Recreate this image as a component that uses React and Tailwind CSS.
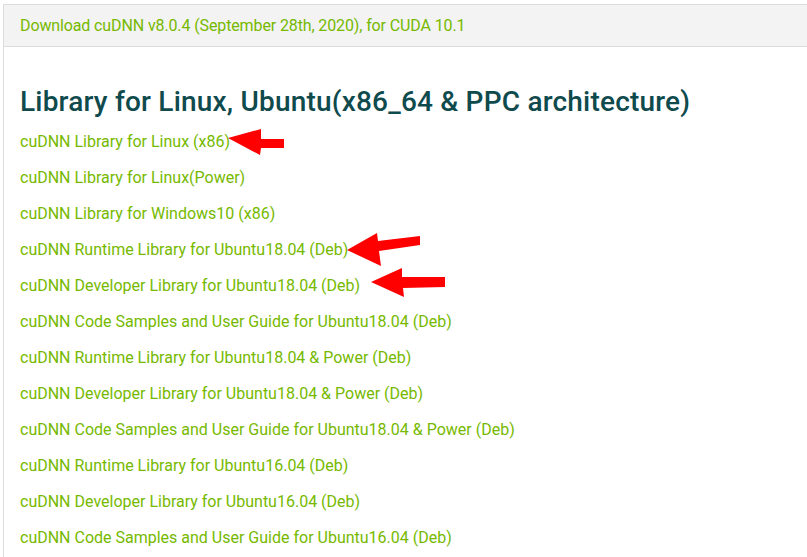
import React from "react";

const links = [
  "cuDNN Library for Linux (x86)",
  "cuDNN Library for Linux(Power)",
  "cuDNN Library for Windows10 (x86)",
  "cuDNN Runtime Library for Ubuntu18.04 (Deb)",
  "cuDNN Developer Library for Ubuntu18.04 (Deb)",
  "cuDNN Code Samples and User Guide for Ubuntu18.04 (Deb)",
  "cuDNN Runtime Library for Ubuntu18.04 & Power (Deb)",
  "cuDNN Developer Library for Ubuntu18.04 & Power (Deb)",
  "cuDNN Code Samples and User Guide for Ubuntu18.04 & Power (Deb)",
  "cuDNN Runtime Library for Ubuntu16.04 (Deb)",
  "cuDNN Developer Library for Ubuntu16.04 (Deb)",
  "cuDNN Code Samples and User Guide for Ubuntu16.04 (Deb)",
];

export default function App() {
  return (
    <div className="relative w-[807px] h-[557px] overflow-hidden bg-white" style={{ fontFamily: "Roboto, 'Liberation Sans', sans-serif" }}>
      <div className="ml-[3px] mt-[4px] h-[600px] border-l border-t border-[#dcdcdc]">
        <div className="h-[42px] bg-[#f3f3f3] border-b border-[#dcdcdc] pl-[16px] flex items-center">
          <span className="text-[16px] text-[#76b900] tracking-[-0.12px]">
            Download cuDNN v8.0.4 (September 28th, 2020), for CUDA 10.1
          </span>
        </div>
        <div className="pl-[16px] pt-[40px]">
          <h2 className="text-[28px] leading-[30px] font-medium tracking-[0.2px] text-[#0f4a4d]">
            Library for Linux, Ubuntu(x86_64 &amp; PPC architecture)
          </h2>
          <div className="flex flex-col mt-[16px]">
            {links.map((t) => (
              <a key={t} className="h-[36px] leading-[18px] text-[16px] text-[#76b900]">
                {t}
              </a>
            ))}
          </div>
        </div>
      </div>
      <svg className="absolute left-0 top-0 pointer-events-none" width="807" height="557" viewBox="0 0 807 557">
        <g fill="#ff0000">
          <polygon points="228,138 261,129 261,139 284,139 284,148 261,148 260,155" />
          <polygon points="347,250 377,233 378,241 420,236 420,245 379,251 381,266" />
          <polygon points="371,282 402,268 402,277 445,277 445,287 403,288 404,297" />
        </g>
      </svg>
    </div>
  );
}
